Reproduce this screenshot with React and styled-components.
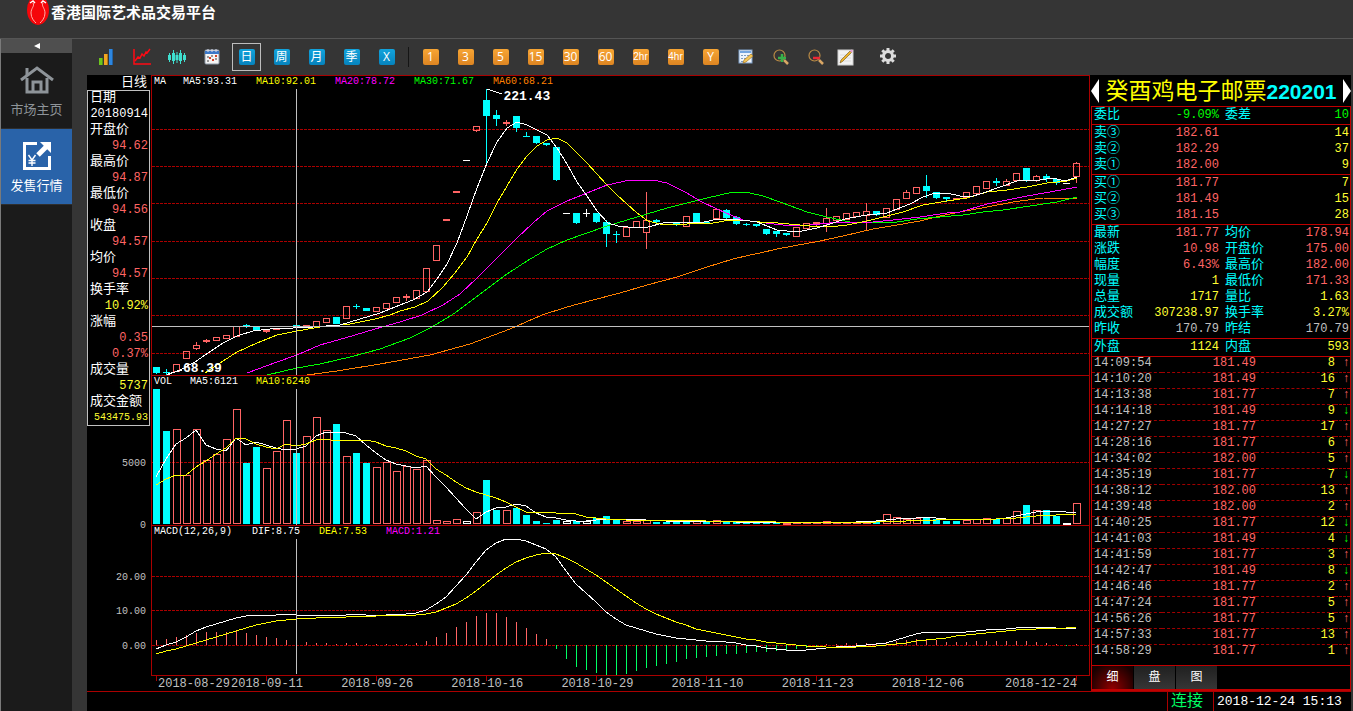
import React from "react";
import styled, { createGlobalStyle } from "styled-components";

const CYAN = "#00ffff";
const RED = "#ff6464";
const YELLOW = "#ffff32";
const GREEN = "#00ff00";
const LINE = "#aa0000";

const GlobalStyle = createGlobalStyle`
  * { box-sizing: border-box; }
  html, body { margin: 0; background: #353535; }
  body { font-family: "Liberation Mono", "Noto Sans CJK SC", monospace; font-size: 13px; color: #fff; }
  button { font: inherit; color: inherit; border: 0; padding: 0; margin: 0; background: none; cursor: pointer; }
  table { border-collapse: separate; border-spacing: 0; }
`;

/* ---------- frame ---------- */
const Page = styled.div`
  min-height: 100vh;
  display: flex;
  flex-direction: column;
`;
const TitleBar = styled.header`
  height: 39px;
  display: flex;
  align-items: flex-start;
  padding-left: 26px;
  border-bottom: 1px solid #555;
  background: #353535;
  overflow: hidden;
`;
const AppTitle = styled.h1`
  margin: 0;
  font: bold 15px/23px "Noto Sans CJK SC", sans-serif;
  color: #fff;
  white-space: nowrap;
`;
const Body = styled.div`
  flex: 1;
  display: flex;
`;
const Sidebar = styled.nav`
  width: 72px;
  flex: none;
  background: #1b1b1b;
  border-left: 1px solid #7a7a7a;
`;
const Collapse = styled.button`
  display: flex;
  align-items: center;
  justify-content: center;
  width: 100%;
  height: 14px;
  background: #4f4f4f;
`;
const NavItem = styled.a`
  display: flex;
  flex-direction: column;
  align-items: center;
  gap: 5px;
  height: 76px;
  padding-top: 12px;
  border-bottom: 1px solid #2e2e2e;
  background: ${(p) => (p.$active ? "#2963a9" : "#1b1b1b")};
  color: ${(p) => (p.$active ? "#fff" : "#8e9499")};
  font: 13px/18px "Noto Sans CJK SC", sans-serif;
  text-decoration: none;
  svg { display: block; }
`;
const Main = styled.main`
  flex: 1;
  min-width: 0;
  display: flex;
  flex-direction: column;
  padding: 0 2px 0 15px;
`;
const Toolbar = styled.div`
  height: 36px;
  display: flex;
  align-items: center;
  padding-left: 2px;
`;
const ToolCell = styled.button`
  width: ${(p) => p.$w || 35}px;
  height: 28px;
  flex: none;
  display: flex;
  align-items: center;
  justify-content: center;
  svg { display: block; }
`;
const ToolFrame = styled.span`
  display: flex;
  align-items: center;
  justify-content: center;
  width: 29px;
  height: 28px;
  border: 1px solid ${(p) => (p.$on ? "#bdbdbd" : "transparent")};
`;
const Tile = styled.span`
  display: block;
  width: 16px;
  height: 16px;
  border-radius: 2px;
  background: ${(p) => (p.$blue ? "linear-gradient(#12a3dc, #0683bd)" : "linear-gradient(#f7a534, #dd8522)")};
  color: #fff;
  font: ${(p) => (p.$small ? "10px" : "12px")}/16px ${(p) => (p.$small ? '"Liberation Sans"' : '"Open Sans"')}, "Noto Sans CJK SC", sans-serif;
  text-align: center;
  white-space: nowrap;
`;
const Separator = styled.span`
  width: 9px;
  height: 20px;
  flex: none;
  display: flex;
  justify-content: center;
  &::after { content: ""; width: 1px; background: #151515; }
`;
const Work = styled.div`
  display: flex;
  background: #000;
`;

/* ---------- cursor data ---------- */
const LeftColumn = styled.aside`
  width: 64px;
  flex: none;
`;
const PeriodName = styled.div`
  height: 15px;
  padding-right: 4px;
  text-align: right;
  font-size: 13px;
  line-height: 16px;
`;
const CursorBox = styled.dl`
  margin: 0 1px 0 0;
  padding: 0 2px 0 3px;
  height: 336px;
  box-shadow: inset 0 0 0 1px #c0c0c0;
`;
const CursorLabel = styled.dt`
  font-size: 13px;
  line-height: 16px;
  height: 16px;
`;
const CursorValue = styled.dd`
  margin: 0;
  display: flex;
  justify-content: flex-end;
  color: ${(p) => p.$c};
  font-size: ${(p) => (p.$small ? 10 : 12)}px;
  line-height: 16px;
  height: 16px;
`;
const AxisLabels = styled.div`
  display: grid;
  grid-template-rows: 29px 16px 46px 16px 36px 16px 18px 16px 19px 16px;
  padding-right: 5px;
  text-align: right;
  color: #c0c0c0;
  font-size: 10px;
  line-height: 18px;
`;
const AxisLabel = styled.span`
  grid-row: ${(p) => p.$row};
`;

/* ---------- charts ---------- */
const Charts = styled.section`
  flex: 1;
  min-width: 0;
`;
const Panel = styled.div`
  position: relative;
  border: 1px solid ${LINE};
  border-bottom: ${(p) => (p.$last ? `1px solid ${LINE}` : "0")};
`;
const Plot = styled.svg`
  display: block;
  width: 100%;
  height: ${(p) => p.$h}px;
  overflow: ${(p) => (p.$open ? "visible" : "hidden")};
  shape-rendering: crispEdges;
`;
const Legend = styled.div`
  display: grid;
  grid-template-columns: ${(p) => p.$cols};
  height: 13px;
  padding-left: 2px;
  font-size: 10px;
  line-height: 12px;
  white-space: nowrap;
`;
const LegendItem = styled.span`
  color: ${(p) => p.$c || "#fff"};
`;
const PriceNote = styled.span`
  position: absolute;
  left: ${(p) => p.$x}%;
  top: ${(p) => p.$y}px;
  font: bold 13px/14px "Liberation Mono", monospace;
`;
const DateAxis = styled.div`
  display: grid;
  grid-template-columns: 70px 3fr repeat(6, 70px 40fr) 70px 43fr 70px;
  height: 15px;
  padding: 0 15px 0 7px;
  color: #c0c0c0;
  font-size: 12px;
  line-height: 17px;
  white-space: nowrap;
`;
const DateLabel = styled.span`
  grid-column: ${(p) => p.$col};
`;

/* ---------- quote panel ---------- */
const Quote = styled.aside`
  width: 261px;
  flex: none;
  padding-left: 1px;
`;
const Instrument = styled.div`
  height: 31px;
  display: flex;
  align-items: center;
  justify-content: space-between;
  font: 23px/26px "Noto Sans CJK SC", sans-serif;
  color: #ffff00;
  white-space: nowrap;
`;
const Code = styled.span`
  color: ${CYAN};
  font: bold 21px/26px "Liberation Sans", sans-serif;
`;
const QuoteFrame = styled.div`
  border: 1px solid #c00000;
  border-bottom-width: 2px;
  border-top: 0;
  height: 585px;
  display: flex;
  flex-direction: column;
`;
const QuoteTable = styled.table`
  width: 100%;
  table-layout: fixed;
  border-top: 1px solid #c00000;
  padding-bottom: 1px;
  td, th { padding: 0; height: 16px; line-height: 16px; font-weight: normal; white-space: nowrap; }
`;
const Name = styled.th`
  width: 45px;
  text-align: left;
  color: ${CYAN};
  font-size: 13px;
  && { padding-left: ${(p) => (p.$second ? 5 : 2)}px; }
`;
const Value = styled.td`
  width: ${(p) => p.$w || "auto"};
  text-align: right;
  font-size: 12px;
  color: ${(p) => p.$c};
  && { padding-right: 1px; }
`;
const TickTable = styled(QuoteTable)`
  flex: none;
  && td { font-size: 12px; line-height: 13px; vertical-align: top; border-bottom: 1px dashed #a00000; }
  && tr:last-child td { border-bottom-color: transparent; }
`;
const TickCell = styled.td`
  width: ${(p) => p.$w};
  text-align: ${(p) => p.$align || "right"};
  color: ${(p) => p.$c};
  && { padding-left: ${(p) => (p.$align === "left" ? 2 : 0)}px; }
`;
const Tabs = styled.div`
  display: flex;
  gap: 1px;
  height: 24px;
  margin-top: auto;
  border-top: 1px solid #c00000;
`;
const Tab = styled.button`
  width: 41px;
  height: 23px;
  font: 12px/19px "Noto Sans CJK SC", sans-serif;
  padding-bottom: 4px;
  background: ${(p) => (p.$on ? "radial-gradient(ellipse at 50% 100%, #900000, #180000 85%)" : "linear-gradient(#202020, #363636)")};
`;
const StatusBar = styled.footer`
  height: 20px;
  display: flex;
  justify-content: flex-end;
  background: #000;
  border-top: 1px solid ${LINE};
`;
const StatusCell = styled.span`
  border-left: 1px solid ${LINE};
  padding-left: 3px;
  width: ${(p) => p.$w}px;
  color: ${(p) => p.$c};
  font-size: ${(p) => p.$size}px;
  line-height: 20px;
  white-space: nowrap;
`;

/* ---------- data ---------- */
const px = (i) => 156 + i * 10;

// kind, body top, body bottom, wick top, wick bottom
const candles = [
  ["c", 367, 373, 367, 374], ["c", 372, 373, 369, 375], ["h", 364, 371], ["h", 351, 358], ["h", 345, 348, 342, 350],
  ["r", 340, 342, 339, 343], ["h", 337, 340], ["h", 335, 338], ["h", 326, 336], ["c", 325, 327, 324, 328],
  ["c", 327, 330, 327, 331], ["r", 330, 332, 329, 333], ["r", 329, 330], ["c", 326, 327], ["c", 325, 327, 325, 327],
  ["r", 325, 326], ["h", 321, 326], ["h", 318, 322], ["c", 317, 324], ["h", 306, 318],
  ["c", 306, 307, 304, 309], ["c", 308, 311], ["h", 307, 311], ["h", 303, 308], ["h", 297, 302],
  ["r", 296, 298, 294, 301], ["h", 290, 298], ["h", 268, 291], ["h", 245, 260], ["r", 219, 221],
  ["r", 191, 193], ["w", 160, 161], ["h", 126, 130, 126, 132], ["c", 100, 116, 89, 163], ["c", 115, 119, 110, 126],
  ["r", 122, 124, 120, 126], ["c", 116, 128, 116, 132], ["c", 136, 137, 132, 137], ["c", 136, 143, 136, 144], ["c", 143, 145, 143, 146],
  ["c", 147, 180, 147, 181], ["w", 213, 214], ["c", 213, 223, 213, 224], ["w", 213, 214, 209, 217], ["c", 213, 222, 213, 223],
  ["c", 222, 234, 220, 247], ["c", 234, 235, 231, 243], ["h", 227, 236], ["h", 221, 227], ["h", 220, 232, 192, 249],
  ["c", 220, 222, 219, 223], ["c", 222, 223], ["c", 223, 225, 223, 226], ["h", 216, 226], ["c", 213, 222],
  ["c", 222, 223], ["h", 209, 218], ["c", 210, 218, 209, 219], ["c", 217, 224, 216, 225], ["c", 224, 225, 223, 226],
  ["c", 224, 226, 224, 227], ["c", 229, 234, 229, 235], ["c", 231, 234, 231, 237], ["c", 233, 235, 233, 236], ["h", 227, 236],
  ["h", 223, 228], ["r", 222, 224, 222, 226], ["h", 218, 223, 208, 232], ["h", 216, 220], ["h", 213, 219],
  ["h", 212, 216], ["h", 211, 215, 203, 230], ["c", 211, 215, 211, 216], ["h", 208, 217], ["h", 199, 209],
  ["h", 192, 198, 190, 198], ["h", 187, 193], ["c", 186, 191, 175, 198], ["c", 192, 198, 192, 199], ["c", 197, 199, 197, 201],
  ["r", 198, 200], ["h", 192, 197], ["h", 186, 193], ["h", 181, 188], ["c", 181, 183, 178, 186],
  ["h", 181, 185, 179, 186], ["h", 173, 180], ["c", 168, 181, 168, 182], ["h", 176, 180, 175, 182], ["c", 176, 179, 174, 182],
  ["c", 179, 183, 179, 185], ["w", 183, 184], ["h", 163, 176, 162, 183],
];

const ma5 = "167,375 180,370 195,362 208,353 223,343 237,336 253,331 270,329 293,328 313,327 340,325 360,319 380,313 400,305 413,300 427,292 437,279 447,264 457,243 467,216 477,188 487,163 497,142 507,128 517,122 527,125 537,130 547,135 557,148 567,164 577,182 587,196 597,211 608,223 618,226 637,228 648,227 663,223 683,222 700,223 713,220 730,219 750,221 757,222 767,226 777,230 787,231 802,231 817,228 830,224 845,219 867,215 887,213 897,209 910,204 923,197 935,193 947,193 960,196 970,197 983,193 1003,186 1017,181 1040,180 1053,178 1065,181 1077,177";
const ma10 = "205,373 220,363 237,352 257,343 277,335 297,331 320,327 350,324 375,319 390,315 400,311 415,307 428,301 443,287 455,273 467,257 477,239 487,223 497,203 507,186 517,169 527,156 537,146 547,140 557,138 567,143 577,153 587,163 597,174 607,185 617,195 627,204 637,213 648,221 660,224 687,224 713,223 730,220 750,221 760,222 778,223 800,225 810,226 830,227 847,225 867,221 883,217 903,212 923,205 947,201 967,198 987,192 1007,190 1027,187 1047,183 1067,181 1077,178";
const ma20 = "247,373 277,362 297,355 320,345 345,338 375,329 400,322 422,315 443,305 460,294 477,278 497,258 517,238 533,223 547,211 567,201 587,193 607,185 630,180 653,180 667,183 687,193 700,201 717,209 733,216 743,220 757,222 783,225 810,225 830,223 873,222 893,220 920,217 947,213 960,212 987,204 1007,200 1027,196 1050,192 1077,187";
const ma30 = "267,375 297,368 320,364 350,357 380,349 410,338 430,328 452,315 467,304 487,289 507,274 527,261 547,249 567,240 587,233 607,226 627,220 647,214 667,208 687,203 707,198 733,192 750,193 763,196 780,202 807,212 827,217 850,222 873,223 897,222 917,219 940,217 963,215 983,212 1003,210 1030,206 1057,202 1077,197";
const ma60 = "307,375 337,371 380,364 430,355 470,344 510,329 542,315 567,307 593,300 620,293 647,285 677,277 707,267 733,259 750,255 760,253 777,249 793,246 820,241 843,236 873,229 897,225 920,221 940,216 960,212 987,207 1013,202 1043,198 1077,199";

const volumeKinds = "ccrrrrrrrccrrrcrrrcrccrrrrrrrrrwrccrcccccwcwcccrrrccccrcrccccccrrrrrrrrrcrrrrccccrrrcrrcrccwr";
const volumeTops = [
  389, 431, 429, 475, 429, 460, 454, 439, 409, 463, 447, 468, 451, 420, 453, 436, 417, 430, 424, 456, 453, 463, 467, 462, 471, 466, 469, 460,
  520, 521, 519, 521, 512, 480, 510, 510, 508, 515, 521, 523, 520, 521, 521, 521, 518, 516, 519, 521, 521, 520, 522, 522, 522, 521, 521, 522, 520, 521, 522, 523,
  523, 523, 523, 523, 522, 522, 522, 521, 522, 522, 522, 521, 522, 514, 517, 519, 518, 517, 519, 521, 521, 520, 519, 518, 519, 518, 511, 505, 510, 510, 516, 523, 503,
];
const volMa5 = [477, 459, 444, 438, 430, 445, 449, 451, 438, 445, 442, 445, 448, 450, 449, 446, 436, 432, 432, 433, 436, 445, 453, 460, 464, 466, 468, 466, 477, 487, 498, 509, 519, 512, 508, 507, 504, 506, 513, 517, 518, 520, 521, 521, 520, 519, 519, 519, 519, 520, 520, 521, 521, 521, 521, 521, 521, 521, 522, 522, 522, 522, 522, 522, 522, 522, 522, 522, 522, 522, 522, 521, 521, 520, 519, 518, 518, 517, 518, 519, 519, 519, 519, 519, 519, 518, 516, 514, 512, 511, 511, 512, 512];
const volMa10 = [485, 479, 475, 475, 467, 461, 454, 448, 438, 439, 444, 447, 449, 444, 446, 444, 440, 439, 441, 440, 441, 440, 442, 446, 448, 451, 456, 459, 469, 475, 482, 488, 492, 495, 498, 502, 507, 512, 512, 512, 513, 513, 514, 517, 518, 519, 519, 520, 520, 520, 520, 520, 520, 520, 520, 521, 521, 521, 521, 521, 521, 521, 522, 522, 522, 522, 522, 522, 522, 522, 522, 522, 522, 521, 521, 521, 520, 520, 520, 519, 519, 519, 519, 519, 519, 518, 518, 517, 516, 515, 515, 514, 514];
const macdEnds = [640, 639, 637, 635, 633, 632, 632, 632, 631, 633, 635, 637, 638, 640, 641, 642, 643, 643, 644, 643, 643, 644, 644, 644, 644, 644, 643, 641, 637, 633, 627, 622, 616, 613, 613, 617, 622, 628, 634, 639, 649, 659, 667, 670, 673, 675, 675, 674, 671, 668, 666, 664, 662, 659, 658, 657, 656, 654, 654, 653, 652, 652, 651, 651, 649, 648, 647, 644, 644, 643, 643, 643, 643, 642, 641, 640, 639, 639, 640, 642, 642, 642, 641, 641, 641, 641, 641, 641, 642, 643, 644, 646, 644];
const dif = [649, 645, 642, 637, 631, 627, 624, 621, 618, 616, 615, 615, 615, 614, 615, 615, 615, 615, 616, 615, 614, 615, 615, 615, 614, 614, 613, 610, 604, 597, 586, 575, 562, 550, 543, 539, 539, 541, 545, 549, 557, 571, 584, 593, 602, 612, 619, 625, 628, 631, 634, 636, 638, 639, 640, 641, 641, 642, 643, 645, 646, 648, 649, 650, 650, 650, 649, 648, 647, 646, 646, 645, 644, 643, 640, 637, 634, 632, 632, 632, 632, 632, 631, 630, 629, 629, 628, 627, 627, 627, 628, 629, 628];
const dea = [654, 651, 649, 646, 643, 640, 637, 634, 631, 628, 625, 623, 621, 620, 619, 618, 618, 617, 617, 617, 616, 616, 616, 615, 615, 615, 615, 614, 612, 608, 604, 598, 591, 583, 575, 568, 562, 558, 555, 553, 554, 558, 563, 569, 575, 582, 589, 596, 603, 609, 614, 618, 622, 625, 629, 631, 633, 635, 637, 639, 640, 642, 643, 644, 645, 646, 646, 647, 647, 647, 647, 646, 646, 645, 644, 643, 641, 640, 639, 638, 636, 635, 634, 633, 632, 631, 630, 629, 629, 628, 628, 628, 627];

const cursorRows = [
  ["日期"], ["20180914", "#fff"], ["开盘价"], ["94.62", RED], ["最高价"], ["94.87", RED], ["最低价"], ["94.56", RED],
  ["收盘"], ["94.57", RED], ["均价"], ["94.57", RED], ["换手率"], ["10.92%", YELLOW], ["涨幅"], ["0.35", RED], ["0.37%", RED],
  ["成交量"], ["5737", YELLOW], ["成交金额"], ["543475.93", YELLOW, true],
];
const dates = ["2018-08-29", "2018-09-11", "2018-09-26", "2018-10-16", "2018-10-29", "2018-11-10", "2018-11-23", "2018-12-06", "2018-12-24"];

const GREY = "#c0c0c0";
const quoteSections = [
  [["委比", "-9.09%", GREEN, "委差", "10", GREEN]],
  [["卖③", "182.61", RED, "", "14", YELLOW], ["卖②", "182.29", RED, "", "37", YELLOW], ["卖①", "182.00", RED, "", "9", YELLOW]],
  [["买①", "181.77", RED, "", "7", YELLOW], ["买②", "181.49", RED, "", "15", YELLOW], ["买③", "181.15", RED, "", "28", YELLOW]],
  [
    ["最新", "181.77", RED, "均价", "178.94", RED], ["涨跌", "10.98", RED, "开盘价", "175.00", RED], ["幅度", "6.43%", RED, "最高价", "182.00", RED],
    ["现量", "1", YELLOW, "最低价", "171.33", RED], ["总量", "1717", YELLOW, "量比", "1.63", YELLOW], ["成交额", "307238.97", YELLOW, "换手率", "3.27%", YELLOW],
    ["昨收", "170.79", GREY, "昨结", "170.79", GREY],
  ],
  [["外盘", "1124", YELLOW, "内盘", "593", YELLOW]],
];
const ticks = [
  ["14:09:54", "181.49", 8, 1], ["14:10:20", "181.49", 16, 1], ["14:13:38", "181.77", 7, 1], ["14:14:18", "181.49", 9, 0], ["14:27:27", "181.77", 17, 1],
  ["14:28:16", "181.77", 6, 1], ["14:34:02", "182.00", 5, 1], ["14:35:19", "181.77", 7, 0], ["14:38:12", "182.00", 13, 1], ["14:39:48", "182.00", 2, 1],
  ["14:40:25", "181.77", 12, 0], ["14:41:03", "181.49", 4, 0], ["14:41:59", "181.77", 3, 1], ["14:42:47", "181.49", 8, 0], ["14:46:46", "181.77", 2, 1],
  ["14:47:24", "181.77", 5, 1], ["14:56:26", "181.77", 5, 1], ["14:57:33", "181.77", 13, 1], ["14:58:29", "181.77", 1, 1],
];

/* ---------- drawing parts ---------- */
const series = (ys) => ys.map((y, i) => `${px(i)},${y}`).join(" ");

function Curve({ points, color }) {
  return <polyline points={points} fill="none" stroke={color} strokeWidth="1" />;
}
function GridLines({ ys }) {
  return ys.map((y) => <line key={y} x1="152" x2="1089" y1={y + 0.5} y2={y + 0.5} stroke={LINE} strokeDasharray="3 1" />);
}
function Crosshair({ top, bottom }) {
  return <rect x="296" y={top} width="1" height={bottom - top} fill="#c0c0c0" />;
}
function Candle({ i, d }) {
  const [kind, top, bottom, high = top, low = bottom] = d;
  const x = px(i);
  const color = { c: CYAN, w: "#fff" }[kind] || RED;
  return (
    <g fill={color}>
      {high < top && <rect x={x} y={high} width="1" height={top - high} />}
      {low > bottom && <rect x={x} y={bottom} width="1" height={low - bottom} />}
      {kind === "h" ? (
        <rect x={x - 2.5} y={top + 0.5} width="6" height={bottom - top} fill="none" stroke={color} />
      ) : (
        <rect x={x - 3} y={top} width="7" height={Math.max(1, bottom - top)} />
      )}
    </g>
  );
}
function VolumeBar({ i }) {
  const kind = volumeKinds[i];
  const top = volumeTops[i];
  const x = px(i);
  if (kind === "c") return <rect x={x - 3} y={top} width="7" height={524 - top} fill={CYAN} />;
  return <rect x={x - 2.5} y={top + 0.5} width="7" height={Math.max(1, 523 - top)} fill="none" stroke={kind === "w" ? "#fff" : RED} />;
}

const LogoMark = () => (
  <svg width="25" height="26" viewBox="0 0 25 26" aria-hidden="true">
    <ellipse cx="12" cy="10" rx="11" ry="15" fill="#f5060a" />
    <path d="M7 3c2 3-2 5-2 10 0 5 3 8 5 10M17 3c-2 3 2 5 2 10 0 5-3 8-5 10" fill="none" stroke="#ffb0a8" strokeWidth="1" />
    <path d="M4 3l3-2 2 2M20 3l-3-2-2 2" fill="none" stroke="#fff" strokeWidth="1.500" />
  </svg>
);
const HomeIcon = () => (
  <svg width="36" height="30" viewBox="0 0 36 30" fill="none" stroke="#8e9499" strokeWidth="3" aria-hidden="true">
    <path d="M2 15L18 3l16 12" />
    <path d="M8 13v14h20V13M8 3v7" />
    <path d="M14 27V17h8v10" />
  </svg>
);
const IssueIcon = () => (
  <svg width="30" height="30" viewBox="0 0 30 30" fill="none" stroke="#fff" strokeWidth="3" aria-hidden="true">
    <path d="M15 2.500H2.500V27.500H27.500V15" />
    <path d="M16 14L24 6" strokeWidth="5" />
    <path d="M18 1h11v11z" fill="#fff" stroke="none" />
    <path d="M6.500 14l3.500 5 3.500-5M6.500 19.500h7M6.500 22h7M10 19v6" strokeWidth="1.400" />
  </svg>
);
const BarsIcon = () => (
  <svg width="18" height="18" viewBox="0 0 18 18" aria-hidden="true">
    <rect x="1" y="10" width="4" height="7" fill="#6cc51d" />
    <rect x="6" y="6" width="4" height="11" fill="#f2a521" />
    <rect x="11" y="1" width="4" height="16" fill="#2d86e0" />
    <path d="M4.500 10v7M9.500 6v11M14.500 1v16" stroke="#0004" />
  </svg>
);
const TrendIcon = () => (
  <svg width="20" height="18" viewBox="0 0 20 18" fill="none" stroke="#ff0a14" strokeWidth="1.500" aria-hidden="true">
    <path d="M2 1v15h17" />
    <path d="M3 13l3-4 2 1 2-4 2 2 2-4 1 1 3-4" />
  </svg>
);
const WaveIcon = () => (
  <svg width="20" height="18" viewBox="0 0 20 18" stroke="#3fe0d0" aria-hidden="true">
    <path d="M2.500 5v9M6.500 2v14M10 4v11M13.500 2v14M17.500 5v9" strokeWidth="1" />
    <path d="M2.500 7v5M6.500 5v8M10 7v5M13.500 5v8M17.500 7v5" strokeWidth="3" />
  </svg>
);
const CalendarIcon = () => (
  <svg width="16" height="16" viewBox="0 0 16 16" aria-hidden="true">
    <rect x="1" y="1" width="14" height="14" rx="1" fill="#f4f4f4" stroke="#8d9aa8" />
    <rect x="1" y="2" width="14" height="3" fill="#3b78c8" />
    <path d="M4 0v3M8 0v3M12 0v3" stroke="#dde" />
    <path d="M3 8h2M7 7h2M11 10h2M3 12h2" stroke="#999" strokeWidth="2" />
    <path d="M5 9h2M8 11h2M11 7h2" stroke="#d4442c" strokeWidth="2" />
  </svg>
);
const SheetIcon = () => (
  <svg width="16" height="16" viewBox="0 0 16 16" aria-hidden="true">
    <rect x="1" y="1" width="13" height="13" fill="#eef4fb" stroke="#7f9fc8" />
    <rect x="2" y="2" width="11" height="2" fill="#74a5df" />
    <path d="M3 6.500h9M3 9.500h9M3 12.500h6" stroke="#7d9cc0" strokeDasharray="2 1" />
    <path d="M5 14l1-3 7-6 2 2-7 6z" fill="#f3c75a" stroke="#a9761f" strokeWidth=".7" />
  </svg>
);
const ZoomIcon = ({ plus }) => (
  <svg width="16" height="16" viewBox="0 0 16 16" fill="none" aria-hidden="true">
    <circle cx="6.500" cy="6.500" r="5.500" stroke="#b98a45" strokeWidth="1.200" />
    <path d="M11 11l4 4" stroke="#d9a765" strokeWidth="2.500" />
    {plus ? <path d="M9 5v8M5 9h8" stroke="#37b04a" strokeWidth="2.500" /> : <path d="M5 9h7" stroke="#ee2734" strokeWidth="2.500" />}
  </svg>
);
const NoteIcon = () => (
  <svg width="17" height="17" viewBox="0 0 17 17" aria-hidden="true">
    <rect x="1" y="1" width="15" height="15" fill="#f2f2f2" stroke="#cfcfcf" />
    <path d="M3 6h11M3 9h11M3 12h11" stroke="#dcdcdc" />
    <path d="M3 14l1-3 9-9 1.500 1.500-9 9z" fill="#eeb429" stroke="#6b5020" strokeWidth=".6" />
    <path d="M13 2l1.500 1.500L16 2l-1.500-1.500z" fill="#e69ad0" />
  </svg>
);
const GearIcon = () => (
  <svg width="18" height="20" viewBox="0 0 18 20" fill="none" stroke="#dcdcdc" aria-hidden="true">
    <circle cx="9" cy="9" r="4.500" strokeWidth="3" />
    <path d="M9 1v3M9 14v3M1 9h3M14 9h3M3.300 3.300l2 2M12.700 12.700l2 2M3.300 14.700l2-2M12.700 5.300l2-2" strokeWidth="3" />
  </svg>
);
const Arrow = ({ right }) => (
  <svg width="8" height="26" viewBox="0 0 8 26" aria-hidden="true">
    <path d={right ? "M0 1v24l8-12z" : "M8 1v24L0 13z"} fill="#fff" />
  </svg>
);

function Tool({ label, children, on, w }) {
  return (
    <ToolCell type="button" aria-label={label} $w={w}>
      <ToolFrame $on={on}>{children}</ToolFrame>
    </ToolCell>
  );
}

export default function App() {
  return (
    <Page>
      <GlobalStyle />
      <TitleBar>
        <LogoMark />
        <AppTitle>香港国际艺术品交易平台</AppTitle>
      </TitleBar>
      <Body>
        <Sidebar>
          <Collapse type="button" aria-label="收起">
            <svg width="6" height="6" viewBox="0 0 6 6"><path d="M6 0v6L0 3z" fill="#fff" /></svg>
          </Collapse>
          <NavItem href="#home"><HomeIcon />市场主页</NavItem>
          <NavItem href="#issue" $active><IssueIcon />发售行情</NavItem>
        </Sidebar>
        <Main>
          <Toolbar>
            <Tool label="柱状图"><BarsIcon /></Tool>
            <Tool label="走势图"><TrendIcon /></Tool>
            <Tool label="K线图"><WaveIcon /></Tool>
            <Tool label="日历"><CalendarIcon /></Tool>
            {["日", "周", "月", "季", "X"].map((t, i) => (
              <Tool key={t} label={t} on={i === 0}><Tile $blue>{t}</Tile></Tool>
            ))}
            <Separator />
            {["1", "3", "5", "15", "30", "60", "2hr", "4hr", "Y"].map((t) => (
              <Tool key={t} label={t}><Tile $small={t.length > 2}>{t}</Tile></Tool>
            ))}
            <Tool label="编辑"><SheetIcon /></Tool>
            <Tool label="放大"><ZoomIcon plus /></Tool>
            <Tool label="缩小"><ZoomIcon /></Tool>
            <Tool label="画线" w={24}><NoteIcon /></Tool>
            <Tool label="设置" w={61}><GearIcon /></Tool>
          </Toolbar>
          <Work>
            <LeftColumn>
              <PeriodName>日线</PeriodName>
              <CursorBox>
                {cursorRows.map(([text, color, small], i) =>
                  color ? <CursorValue key={i} $c={color} $small={small}>{text}</CursorValue> : <CursorLabel key={i}>{text}</CursorLabel>
                )}
              </CursorBox>
              <AxisLabels>
                {["5000", "0", "20.00", "10.00", "0.00"].map((t, i) => <AxisLabel key={t} $row={i * 2 + 2}>{t}</AxisLabel>)}
              </AxisLabels>
            </LeftColumn>
            <Charts>
              <Panel>
                <Legend $cols="29px 73px 79px 79px 79px auto">
                  <LegendItem>MA</LegendItem>
                  <LegendItem>MA5:93.31</LegendItem>
                  <LegendItem $c="#ffff00">MA10:92.01</LegendItem>
                  <LegendItem $c="#ff00ff">MA20:78.72</LegendItem>
                  <LegendItem $c={GREEN}>MA30:71.67</LegendItem>
                  <LegendItem $c="#ff8000">MA60:68.21</LegendItem>
                </Legend>
                <Plot $h={286} viewBox="152 89 937 286" preserveAspectRatio="none">
                  <GridLines ys={[129, 166, 203, 241, 278, 315, 353]} />
                  {candles.map((d, i) => <Candle key={i} i={i} d={d} />)}
                  <Curve points={ma60} color="#ff8000" />
                  <Curve points={ma30} color={GREEN} />
                  <Curve points={ma20} color="#ff00ff" />
                  <Curve points={ma10} color="#ffff00" />
                  <Curve points={ma5} color="#fff" />
                  <Curve points="487,89 502,94" color="#fff" />
                  <Curve points="168,374 182,370" color="#fff" />
                  <rect x="152" y="326" width="937" height="1" fill="#c0c0c0" />
                  <Crosshair top={89} bottom={375} />
                </Plot>
                <PriceNote $x={37.5} $y={14}>221.43</PriceNote>
                <PriceNote $x={3.3} $y={286}>68.39</PriceNote>
              </Panel>
              <Panel>
                <Legend $cols="36px 66px auto">
                  <LegendItem>VOL</LegendItem>
                  <LegendItem>MA5:6121</LegendItem>
                  <LegendItem $c="#ffff00">MA10:6240</LegendItem>
                </Legend>
                <Plot $h={136} viewBox="152 389 937 136" preserveAspectRatio="none">
                  <GridLines ys={[462]} />
                  {volumeTops.map((_, i) => <VolumeBar key={i} i={i} />)}
                  <Curve points={series(volMa5)} color="#fff" />
                  <Curve points={series(volMa10)} color="#ffff00" />
                  <Crosshair top={389} bottom={525} />
                </Plot>
              </Panel>
              <Panel $last>
                <Legend $cols="98px 67px 67px auto">
                  <LegendItem>MACD(12,26,9)</LegendItem>
                  <LegendItem>DIF:8.75</LegendItem>
                  <LegendItem $c="#ffff00">DEA:7.53</LegendItem>
                  <LegendItem $c="#ff00ff">MACD:1.21</LegendItem>
                </Legend>
                <Plot $h={136} $open viewBox="152 539 937 136" preserveAspectRatio="none">
                  <GridLines ys={[576, 610, 645]} />
                  {macdEnds.map((y, i) => (
                    <rect key={i} x={px(i)} y={Math.min(y, 645)} width="1" height={Math.max(1, Math.abs(y - 645))} fill={y > 645 ? "#00ff64" : RED} />
                  ))}
                  <Curve points={series(dif)} color="#fff" />
                  <Curve points={series(dea)} color="#ffff00" />
                  <Crosshair top={539} bottom={674} />
                  {[0, 11, 22, 33, 44, 55, 66, 77, 92].map((i) => <rect key={i} x={px(i)} y="675" width="1" height="6" fill={LINE} />)}
                </Plot>
              </Panel>
              <DateAxis>
                {dates.map((t, i) => <DateLabel key={t} $col={i * 2 + 1}>{t}</DateLabel>)}
              </DateAxis>
            </Charts>
            <Quote>
              <Instrument>
                <Arrow />
                <span>癸酉鸡电子邮票<Code>220201</Code></span>
                <Arrow right />
              </Instrument>
              <QuoteFrame>
                {quoteSections.map((rows, s) => (
                  <QuoteTable key={s}>
                    <tbody>
                      {rows.map((r) => (
                        <tr key={r[0]}>
                          <Name scope="row">{r[0]}</Name>
                          <Value $w="83px" $c={r[2]}>{r[1]}</Value>
                          <Name scope="row" $second>{r[3]}</Name>
                          <Value $c={r[5]}>{r[4]}</Value>
                        </tr>
                      ))}
                    </tbody>
                  </QuoteTable>
                ))}
                <TickTable>
                  <tbody>
                    {ticks.map(([time, price, count, up]) => (
                      <tr key={time}>
                        <TickCell $w="70px" $align="left" $c={GREY}>{time}</TickCell>
                        <TickCell $w="94px" $c={RED}>{price}</TickCell>
                        <TickCell $w="79px" $c={YELLOW}>{count}</TickCell>
                        <TickCell $c={up ? RED : GREEN}>{up ? "↑" : "↓"}</TickCell>
                      </tr>
                    ))}
                  </tbody>
                </TickTable>
                <Tabs role="tablist">
                  <Tab type="button" role="tab" aria-selected="true" $on>细</Tab>
                  <Tab type="button" role="tab" aria-selected="false">盘</Tab>
                  <Tab type="button" role="tab" aria-selected="false">图</Tab>
                </Tabs>
              </QuoteFrame>
            </Quote>
          </Work>
          <StatusBar>
            <StatusCell $w={46} $size={16} $c="#00ff64">连接</StatusCell>
            <StatusCell $w={138} $size={13} $c="#fff">2018-12-24 15:13</StatusCell>
          </StatusBar>
        </Main>
      </Body>
    </Page>
  );
}
